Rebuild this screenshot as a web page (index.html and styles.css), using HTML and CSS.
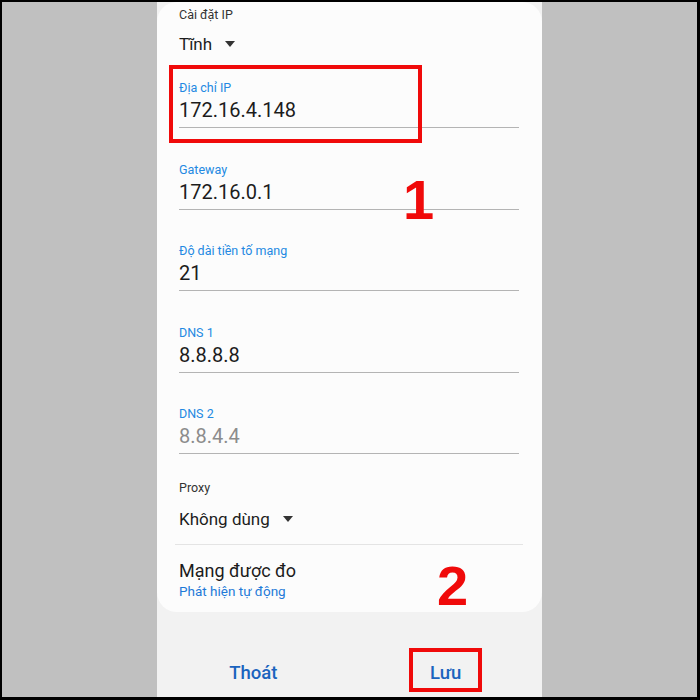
FILE: index.html
```html
<!DOCTYPE html>
<html lang="vi">
<head>
    <meta charset="UTF-8">
    <meta name="viewport" content="width=device-width, initial-scale=1.0">
    <title>Cài đặt IP</title>
    <link rel="stylesheet" href="styles.css">
</head>
<body>
    <div class="frame">
        <div class="screen">
            <!-- Settings card -->
            <div class="card">
                <div class="select-label">Cài đặt IP</div>
                <div class="select">Tĩnh <span class="caret"></span></div>

                <div class="field first">
                    <div class="field-label">Địa chỉ IP</div>
                    <div class="field-value">172.16.4.148</div>
                    <div class="mark mark-ip"></div>
                </div>

                <div class="field">
                    <div class="field-label">Gateway</div>
                    <div class="field-value">172.16.0.1</div>
                </div>

                <div class="field">
                    <div class="field-label">Độ dài tiền tố mạng</div>
                    <div class="field-value">21</div>
                </div>

                <div class="field">
                    <div class="field-label">DNS 1</div>
                    <div class="field-value">8.8.8.8</div>
                </div>

                <div class="field">
                    <div class="field-label">DNS 2</div>
                    <div class="field-value hint">8.8.4.4</div>
                </div>

                <div class="select-label proxy">Proxy</div>
                <div class="select">Không dùng <span class="caret"></span></div>

                <div class="divider"></div>

                <div class="metered">Mạng được đo</div>
                <div class="metered-sub">Phát hiện tự động</div>
            </div>

            <!-- Bottom buttons -->
            <div class="actions">
                <div class="action"><span class="action-text">Thoát</span></div>
                <div class="action"><span class="action-text">Lưu<span class="mark mark-save"></span></span></div>
            </div>

            <div class="step step-one">1</div>
            <div class="step step-two">2</div>
        </div>
    </div>
</body>
</html>
```

FILE: styles.css
```css
/* Page frame */
html, body {
    margin: 0;
    padding: 0;
}

body {
    font-family: Roboto, "Noto Sans", "Liberation Sans", sans-serif;
}

.frame {
    width: 700px;
    height: 700px;
    box-sizing: border-box;
    border-style: solid;
    border-color: #000;
    border-width: 2px 3px 3px 2px;
    background-color: #c0c0c0;
    display: flex;
    justify-content: center;
}

.screen {
    width: 385px;
    background-color: #f2f2f2;
    display: flex;
    flex-direction: column;
    position: relative;
}

/* Settings card */
.card {
    background-color: #fcfcfc;
    border-radius: 20px;
    padding: 5px 23px 12px 22px;
}

.select-label {
    font-size: 12.5px;
    line-height: 16px;
    color: #333;
}

.select-label.proxy {
    margin-top: 26px;
}

.select {
    margin-top: 10px;
    font-size: 17px;
    line-height: 22px;
    color: #1c1c1c;
    display: flex;
    align-items: center;
}

.proxy + .select {
    margin-top: 12px;
}

.caret {
    width: 0;
    height: 0;
    margin-left: 13px;
    border-left: 5px solid transparent;
    border-right: 5px solid transparent;
    border-top: 6px solid #333;
}

/* Text fields */
.field {
    position: relative;
    margin-top: 33.5px;
    padding-bottom: 5px;
    border-bottom: 1px solid #b4b4b4;
}

.field.first {
    margin-top: 25px;
}

.field-label {
    font-size: 12.5px;
    line-height: 16px;
    color: #2389e2;
}

.field-value {
    margin-top: 2px;
    font-size: 20px;
    line-height: 24px;
    color: #1c1c1c;
}

.field-value.hint {
    color: #8c8c8c;
}

.divider {
    margin: 14px -4px 0 -4px;
    border-top: 1px solid #e4e4e4;
}

.metered {
    margin-top: 15px;
    font-size: 18px;
    line-height: 22px;
    color: #1c1c1c;
}

.metered-sub {
    margin-top: 1px;
    font-size: 13.5px;
    line-height: 17px;
    color: #1f7ad8;
}

/* Bottom buttons */
.actions {
    display: flex;
    padding-top: 49px;
}

.action {
    flex: 1;
    text-align: center;
}

.action-text {
    position: relative;
    font-size: 18.5px;
    line-height: 24px;
    font-weight: 500;
    color: #1b64be;
}

/* Red annotations */
.mark {
    position: absolute;
    border: 4px solid #f00a0a;
    box-sizing: border-box;
}

.mark-ip {
    left: -10px;
    top: -15px;
    width: 253px;
    height: 78px;
}

.mark-save {
    left: -21px;
    right: -21px;
    top: -14px;
    bottom: -8px;
}

.step {
    position: absolute;
    font-family: "Liberation Sans", Arial, sans-serif;
    font-weight: bold;
    font-size: 56px;
    line-height: 1;
    color: #f00a0a;
}

.step-one {
    left: 246px;
    top: 170px;
}

.step-two {
    left: 280px;
    top: 556px;
}
```
